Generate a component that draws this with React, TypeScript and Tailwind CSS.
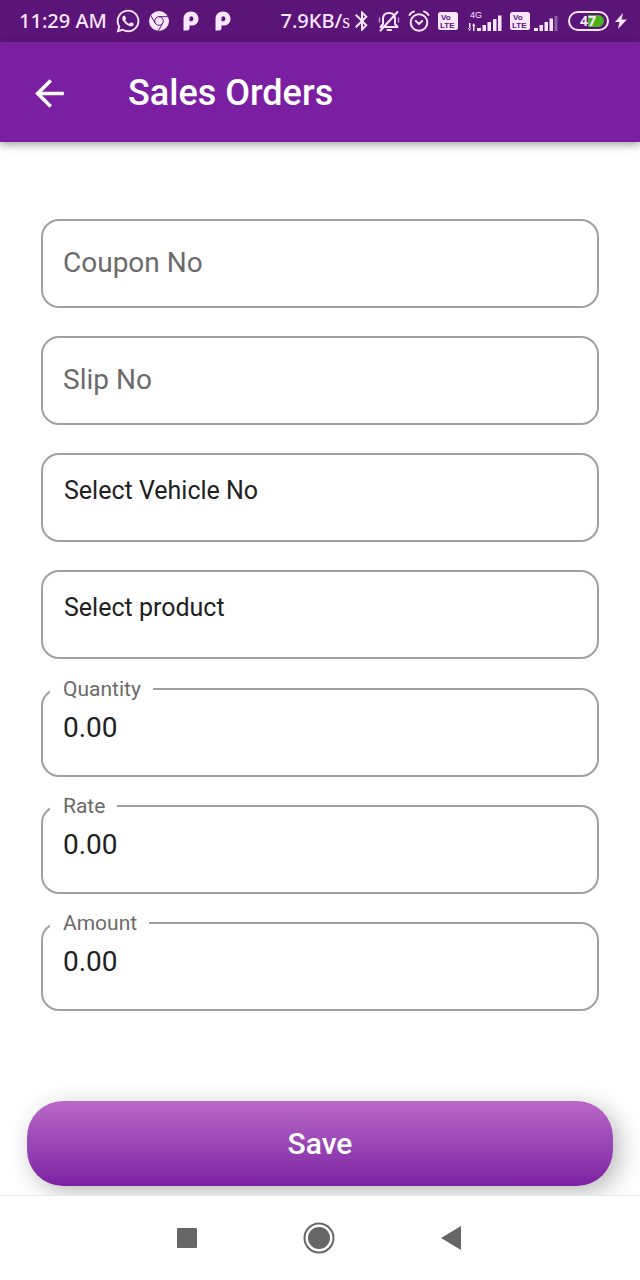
import { useState } from "react";
import { FaWhatsapp } from "react-icons/fa";
import { MdArrowBack, MdBluetooth } from "react-icons/md";

type FieldProps = {
  name: string;
  label: string;
};

const ChromeIcon = () => (
  <svg className="size-5" viewBox="0 0 20 20" fill="none" aria-hidden="true">
    <circle cx="10" cy="10" r="10" fill="currentColor" />
    <circle cx="10" cy="10" r="4.3" stroke="#5b1478" strokeWidth="1" />
    <path d="M10 5.7H19M6.3 12.2L1.8 4.5M13.7 12.2L9.3 20" stroke="#5b1478" strokeWidth="1" />
  </svg>
);

const PayIcon = () => (
  <svg className="h-5 w-4" viewBox="0 0 16 20" aria-hidden="true">
    <path
      d="M0.5 8C0.5 3.5 3.5 0.500 8 0.500C12.500 0.500 15.500 3.500 15.500 8C15.500 12 12.500 14.500 9 14.500H6.500V17Q6.500 19.500 4 19.500H0.500ZM8.200 5.200C7 5.200 6.500 6.200 6.500 7.500V10.200H8.200C9.600 10.200 10.400 9.300 10.400 7.800C10.400 6.200 9.500 5.200 8.200 5.200Z"
      fill="currentColor"
      fillRule="evenodd"
    />
  </svg>
);

const BellOffIcon = () => (
  <svg
    className="h-[22px] w-[22px]"
    viewBox="0 0 22 22"
    fill="none"
    stroke="currentColor"
    strokeWidth="2"
    strokeLinecap="round"
    strokeLinejoin="round"
    aria-hidden="true"
  >
    <path d="M2.5 17H19.5L17 14V9Q17 3 11 3Q5 3 5 9V14L2.5 17M9.5 20H13M2.5 20.5L19.5 2" />
    <path d="M1.5 8V12M20.5 8V12" strokeWidth="1.5" opacity="0.6" />
  </svg>
);

const AlarmIcon = () => (
  <svg
    className="h-[22px] w-[22px]"
    viewBox="0 0 22 22"
    fill="none"
    stroke="currentColor"
    strokeWidth="2"
    strokeLinecap="round"
    strokeLinejoin="round"
    aria-hidden="true"
  >
    <circle cx="11" cy="12.5" r="8.3" />
    <path d="M7.8 11L11 14L14.2 11M1.5 5Q3 2.3 6 1.5M20.5 5Q19 2.3 16 1.5" />
  </svg>
);

const VolteIcon = () => (
  <svg className="h-[18px] w-5" viewBox="0 0 20 18" aria-hidden="true">
    <rect width="20" height="18" rx="2.5" fill="currentColor" />
    <g fill="#5b1478" fontFamily="Liberation Sans, sans-serif" fontWeight="700">
      <text x="3" y="8" fontSize="8">
        Vo
      </text>
      <text x="2" y="16" fontSize="8">
        LTE
      </text>
    </g>
  </svg>
);

const DataSignalIcon = () => (
  <svg className="h-6 w-[34px]" viewBox="0 0 34 24" fill="currentColor" aria-hidden="true">
    <text x="2" y="9" fontFamily="Liberation Sans, sans-serif" fontSize="9">
      4G
    </text>
    <path d="M1 14h1.5v6H1zM5 16h1.5v6H5zM0 19l1.7 3 1.7-3zM4 17l1.7-3 1.7 3z" />
    <path d="M9 19h4v3H9zM14.5 16H18v6h-3.5zM19.5 13H23v9h-3.5zM25 10h3.5v12H25zM30 6.5h3.5V22H30z" />
  </svg>
);

const SignalIcon = () => (
  <svg className="h-6 w-6" viewBox="0 0 24 24" fill="currentColor" aria-hidden="true">
    <path d="M0 19h4v3H0zM5.5 16H9v6H5.5zM10.5 13H14v9h-3.5zM15.5 9.5H19V22h-3.5z" />
    <path d="M20.5 7h3v15h-3z" opacity="0.35" />
  </svg>
);

const BatteryIcon = () => (
  <svg className="h-5 w-[41px]" viewBox="0 0 41 20" aria-hidden="true">
    <path d="M20 4h10a6 6 0 0 1 0 12H20z" fill="#4caf1e" />
    <rect x="1" y="1" width="39" height="18" rx="9" fill="none" stroke="currentColor" strokeWidth="2" />
    <text
      x="20"
      y="15"
      textAnchor="middle"
      fill="currentColor"
      fontFamily="Noto Sans, sans-serif"
      fontSize="14"
      fontWeight="700"
    >
      47
    </text>
  </svg>
);

const BoltIcon = () => (
  <svg className="h-4 w-3" viewBox="0 0 12 16" fill="currentColor" aria-hidden="true">
    <path d="M8 0L0 9H4.5L3 16L12 6.5H6.5Z" />
  </svg>
);

const StatusBar = () => (
  <div className="flex h-[42px] items-center justify-between bg-[#5b1478] pr-[13px] pl-[19px] font-['Noto_Sans',sans-serif] text-xl font-medium text-[#fbe6ff]">
    <div className="flex items-center">
      <span>11:29 AM</span>
      <FaWhatsapp className="ml-2 size-[26px]" />
      <div className="ml-2">
        <ChromeIcon />
      </div>
      <div className="ml-[14px] flex gap-4">
        <PayIcon />
        <PayIcon />
      </div>
    </div>
    <div className="flex items-center">
      <span>
        7.9KB/<span className="font-['Liberation_Serif',serif]">s</span>
      </span>
      <MdBluetooth className="size-6" />
      <div className="ml-1 flex items-center gap-2">
        <BellOffIcon />
        <AlarmIcon />
        <VolteIcon />
      </div>
      <div className="ml-[10px] flex items-center gap-2">
        <DataSignalIcon />
        <VolteIcon />
      </div>
      <div className="ml-1 flex items-center gap-[10px]">
        <SignalIcon />
        <div className="flex items-center gap-[6px]">
          <BatteryIcon />
          <BoltIcon />
        </div>
      </div>
    </div>
  </div>
);

const TextField = ({ name, label }: FieldProps) => (
  <input
    name={name}
    aria-label={label}
    placeholder={label}
    className="h-[89px] w-full rounded-[18px] border-2 border-[#a0a0a0] px-5 pb-[3px] text-[28px] text-[#212121] outline-none placeholder:text-[#6b6b6b]"
  />
);

const SelectField = ({ name, label }: FieldProps) => (
  <select
    name={name}
    aria-label={label}
    className="h-[89px] w-full appearance-none rounded-[18px] border-2 border-[#a0a0a0] bg-white px-[21px] pb-[14px] text-[25px] text-[#212121] outline-none"
  >
    <option>{label}</option>
  </select>
);

const AmountField = ({ name, label }: FieldProps) => {
  const [value, setValue] = useState("0.00");

  return (
    <div className="relative">
      <label
        htmlFor={name}
        className="absolute -top-[11px] left-[9px] bg-white pr-3 pl-[13px] text-[21px] leading-6 text-[#6b6b6b]"
      >
        {label}
      </label>
      <input
        id={name}
        name={name}
        inputMode="decimal"
        value={value}
        onChange={(e) => setValue(e.target.value)}
        className="block h-[89px] w-full rounded-[18px] border-2 border-[#a0a0a0] px-5 pb-[10px] text-[28px] text-[#212121] outline-none"
      />
    </div>
  );
};

const NavBar = () => (
  <nav className="z-10 flex h-[85px] items-center justify-center gap-[106px] border-t border-[#e8e8e8] bg-white pr-[2px] text-[#666666]">
    <button aria-label="Recent apps">
      <svg className="size-5" viewBox="0 0 20 20" fill="currentColor">
        <rect width="20" height="20" rx="1" />
      </svg>
    </button>
    <button aria-label="Home">
      <svg className="size-8" viewBox="0 0 32 32" fill="currentColor">
        <circle cx="16" cy="16" r="14.5" fill="none" stroke="currentColor" strokeWidth="2" />
        <circle cx="16" cy="16" r="11" />
      </svg>
    </button>
    <button aria-label="Back">
      <svg className="h-6 w-5" viewBox="0 0 20 24" fill="currentColor">
        <path d="M0 12L20 0V24Z" />
      </svg>
    </button>
  </nav>
);

export default function App() {
  return (
    <div className="flex min-h-screen flex-col bg-white font-[Roboto,sans-serif]">
      <StatusBar />
      <header className="flex h-[100px] items-center bg-[#7b1fa2] pt-[2px] pl-7 text-white shadow-[0_3px_8px_rgba(0,0,0,0.35)]">
        <button aria-label="Go back">
          <MdArrowBack className="size-[43px]" />
        </button>
        <h1 className="ml-[57px] text-4xl font-medium">Sales Orders</h1>
      </header>

      <form
        className="flex flex-1 flex-col"
        onSubmit={(e) => e.preventDefault()}
      >
        <div className="flex flex-1 flex-col justify-between gap-7 px-[41px] pt-[77px] pb-[90px]">
          <TextField name="coupon" label="Coupon No" />
          <TextField name="slip" label="Slip No" />
          <SelectField name="vehicle" label="Select Vehicle No" />
          <SelectField name="product" label="Select product" />
          <AmountField name="quantity" label="Quantity" />
          <AmountField name="rate" label="Rate" />
          <AmountField name="amount" label="Amount" />
        </div>
        <div className="px-[27px] pb-[9px]">
          <button
            type="submit"
            className="block h-[85px] w-full rounded-[36px] bg-linear-to-b from-[#ba68c8] to-[#7b1fa2] text-3xl font-medium text-white shadow-[6px_6px_24px_rgba(0,0,0,0.28)]"
          >
            Save
          </button>
        </div>
      </form>

      <NavBar />
    </div>
  );
}
